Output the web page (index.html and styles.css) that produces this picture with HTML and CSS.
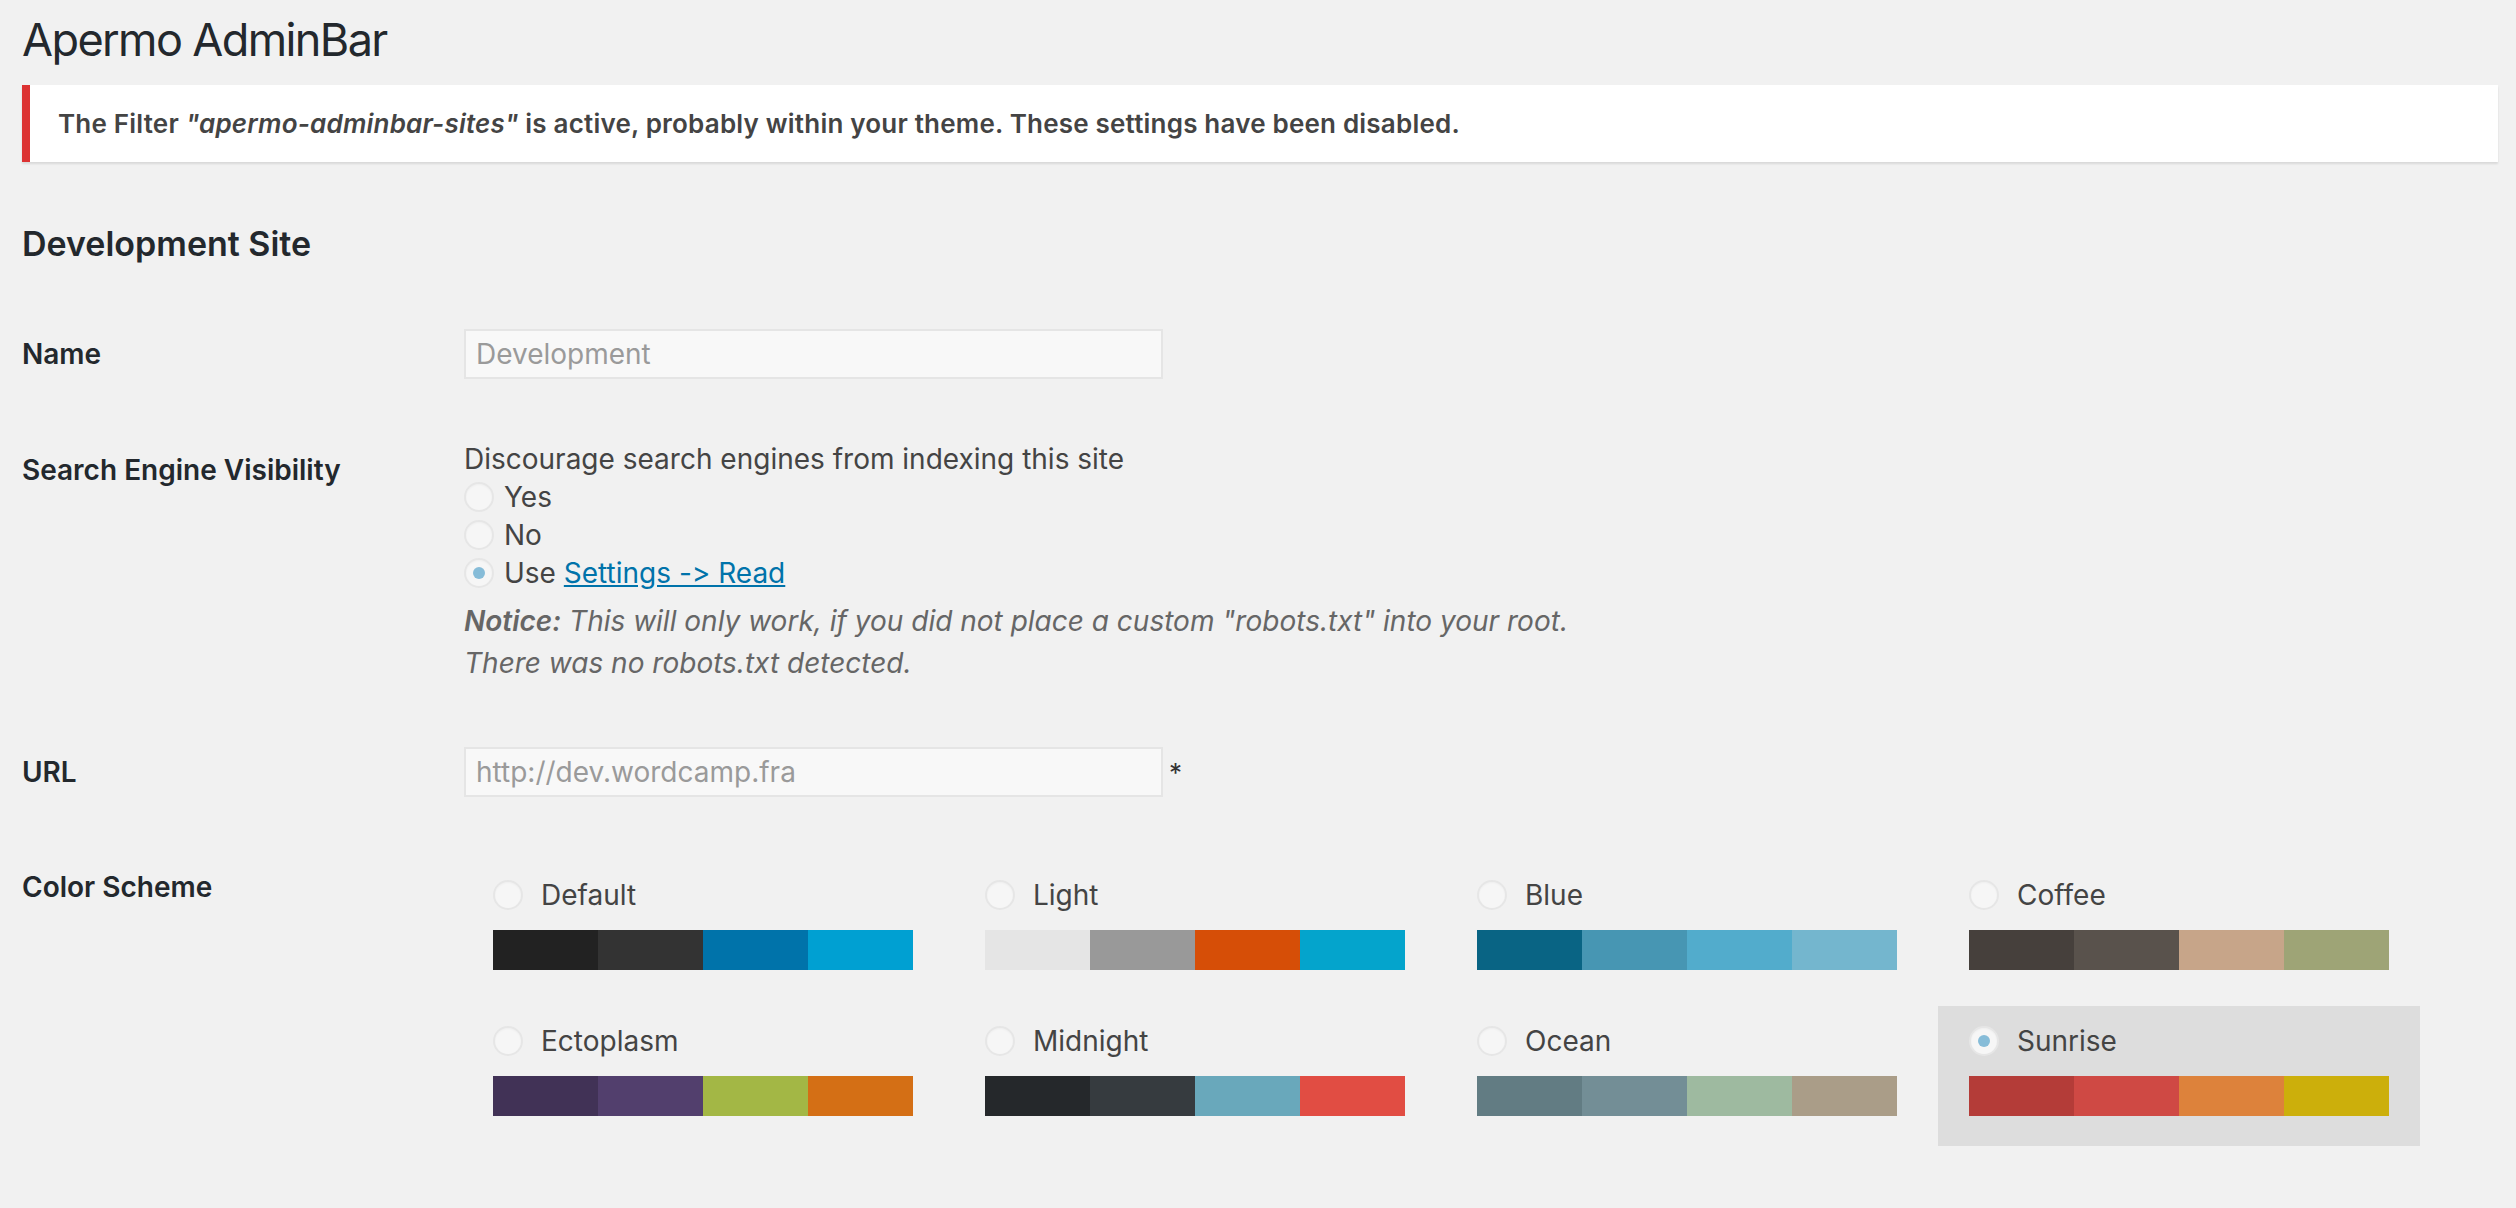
FILE: index.html
```html
<!DOCTYPE html>
<html lang="en">
<head>
<meta charset="utf-8">
<title>Apermo AdminBar</title>
<link rel="stylesheet" href="styles.css">
</head>
<body>
<div class="wrap">
  <h1 class="title">Apermo AdminBar</h1>
  <div class="notice"><p>The Filter <em>"apermo-adminbar-sites"</em> is active, probably within your theme. These settings have been disabled.</p></div>
  <h2 class="section">Development Site</h2>

  <div class="row row-name">
    <div class="th th-input">Name</div>
    <div class="td"><input class="field" type="text" value="Development" disabled></div>
  </div>

  <div class="row row-sev">
    <div class="th th-sev">Search Engine Visibility</div>
    <div class="td td-sev">
      <div class="line">Discourage search engines from indexing this site</div>
      <div class="line opt"><span class="radio"></span>Yes</div>
      <div class="line opt"><span class="radio"></span>No</div>
      <div class="line opt"><span class="radio checked"></span>Use&nbsp;<a href="#" class="link">Settings -&gt; Read</a></div>
      <p class="hint"><b>Notice:</b> This will only work, if you did not place a custom "robots.txt" into your root.<br>There was no robots.txt detected.</p>
    </div>
  </div>

  <div class="row row-url">
    <div class="th th-input">URL</div>
    <div class="td td-url"><input class="field" type="text" value="http://dev.wordcamp.fra" disabled><span class="req">*</span></div>
  </div>

  <div class="row row-color">
    <div class="th th-color">Color Scheme</div>
    <div class="td schemes">
      <div class="scheme">
        <div class="scheme-label"><span class="radio"></span>Default</div>
        <div class="palette"><span class="c1"></span><span class="c2"></span><span class="c3"></span><span class="c4"></span></div>
      </div>
      <div class="scheme">
        <div class="scheme-label"><span class="radio"></span>Light</div>
        <div class="palette"><span class="l1"></span><span class="l2"></span><span class="l3"></span><span class="l4"></span></div>
      </div>
      <div class="scheme">
        <div class="scheme-label"><span class="radio"></span>Blue</div>
        <div class="palette"><span class="b1"></span><span class="b2"></span><span class="b3"></span><span class="b4"></span></div>
      </div>
      <div class="scheme">
        <div class="scheme-label"><span class="radio"></span>Coffee</div>
        <div class="palette"><span class="f1"></span><span class="f2"></span><span class="f3"></span><span class="f4"></span></div>
      </div>
      <div class="scheme">
        <div class="scheme-label"><span class="radio"></span>Ectoplasm</div>
        <div class="palette"><span class="e1"></span><span class="e2"></span><span class="e3"></span><span class="e4"></span></div>
      </div>
      <div class="scheme">
        <div class="scheme-label"><span class="radio"></span>Midnight</div>
        <div class="palette"><span class="m1"></span><span class="m2"></span><span class="m3"></span><span class="m4"></span></div>
      </div>
      <div class="scheme">
        <div class="scheme-label"><span class="radio"></span>Ocean</div>
        <div class="palette"><span class="o1"></span><span class="o2"></span><span class="o3"></span><span class="o4"></span></div>
      </div>
      <div class="scheme selected">
        <div class="scheme-label"><span class="radio checked"></span>Sunrise</div>
        <div class="palette"><span class="s1"></span><span class="s2"></span><span class="s3"></span><span class="s4"></span></div>
      </div>
    </div>
  </div>
</div>
</body>
</html>
```
FILE: styles.css
```css
* { box-sizing: border-box; }
html, body { margin: 0; padding: 0; }
body {
  background: #f1f1f1;
  font-family: Inter, "Noto Sans", sans-serif;
  font-feature-settings: "calt" 0;
  color: #444;
  width: 2516px;
  height: 1208px;
  overflow: hidden;
}
.wrap { padding: 9px 18px 0 22px; }
.title {
  margin: 0;
  font-size: 45px;
  font-weight: 400;
  letter-spacing: -1.6px;
  line-height: 62px;
  color: #23282d;
}
.notice {
  margin-top: 14px;
  height: 77px;
  background: #fff;
  border-left: 8px solid #dc3232;
  box-shadow: 0 2px 2px rgba(0, 0, 0, 0.1);
  display: flex;
  align-items: center;
  padding-left: 28px;
}
.notice p {
  margin: 0;
  font-size: 26px;
  font-weight: 600;
  letter-spacing: 0.2px;
  color: #444;
}
.section {
  margin: 62px 0 0;
  font-size: 34px;
  font-weight: 600;
  line-height: 40px;
  color: #23282d;
}
.row {
  display: grid;
  grid-template-columns: 440px 1fr;
  align-items: start;
}
.th {
  font-size: 28px;
  font-weight: 600;
  color: #23282d;
}
.td { font-size: 28px; color: #444; padding-left: 2px; }
.th-input { line-height: 50px; }
.row-name { margin-top: 65px; }
.row-sev { margin-top: 61px; }
.row-url { margin-top: 63px; }
.row-color { margin-top: 63px; }
.th-sev { padding-top: 11px; line-height: 38px; }
.th-color { padding-top: 8px; line-height: 38px; }

.field {
  display: block;
  width: 699px;
  height: 50px;
  margin: 0;
  border: 2px solid #e5e5e5;
  background: #f8f8f8;
  color: #9a9a9a;
  font-family: inherit;
  font-feature-settings: "calt" 0;
  font-size: 28px;
  padding: 0 10px;
  border-radius: 0;
}
.td-url { display: flex; align-items: center; }
.req { margin-left: 6px; font-size: 26px; color: #333; align-self: center; }

.td-sev .line { line-height: 38px; }
.opt { display: flex; align-items: center; }
.radio {
  flex: none;
  width: 30px;
  height: 30px;
  border-radius: 50%;
  border: 2px solid #e6e6e6;
  background: #f6f6f6;
  box-shadow: inset 0 1px 2px rgba(0, 0, 0, 0.03);
  display: inline-flex;
  align-items: center;
  justify-content: center;
}
.opt .radio { margin-right: 10px; }
.radio.checked::before {
  content: "";
  width: 12px;
  height: 12px;
  border-radius: 50%;
  background: #86bcd8;
}
.link { color: #0073aa; text-decoration: underline; font-feature-settings: "calt" 0; }
.hint {
  margin: 8px 0 0;
  font-style: italic;
  color: #666;
  line-height: 42px;
}
.hint b { font-weight: 600; }

.schemes {
  display: flex;
  flex-wrap: wrap;
  gap: 6px 10px;
  padding-left: 0;
}
.scheme {
  width: 482px;
  padding: 10px 31px 30px;
}
.scheme.selected { background: #ddd; }
.scheme-label {
  display: flex;
  align-items: center;
  height: 50px;
  gap: 18px;
  font-size: 28px;
  color: #444;
}
.palette { display: flex; height: 40px; margin-top: 10px; }
.palette span { flex: 1; }

.c1 { background: #222; } .c2 { background: #333; } .c3 { background: #0073aa; } .c4 { background: #00a0d2; }
.l1 { background: #e5e5e5; } .l2 { background: #999; } .l3 { background: #d64e07; } .l4 { background: #04a4cc; }
.b1 { background: #096484; } .b2 { background: #4796b3; } .b3 { background: #52accc; } .b4 { background: #74b6ce; }
.f1 { background: #46403c; } .f2 { background: #59524c; } .f3 { background: #c7a589; } .f4 { background: #9ea476; }
.e1 { background: #413256; } .e2 { background: #523f6d; } .e3 { background: #a3b745; } .e4 { background: #d46f15; }
.m1 { background: #25282b; } .m2 { background: #363b3f; } .m3 { background: #69a8bb; } .m4 { background: #e14d43; }
.o1 { background: #627c83; } .o2 { background: #738e96; } .o3 { background: #9ebaa0; } .o4 { background: #aa9d88; }
.s1 { background: #b43c38; } .s2 { background: #cf4944; } .s3 { background: #dd823b; } .s4 { background: #ccaf0b; }
```
